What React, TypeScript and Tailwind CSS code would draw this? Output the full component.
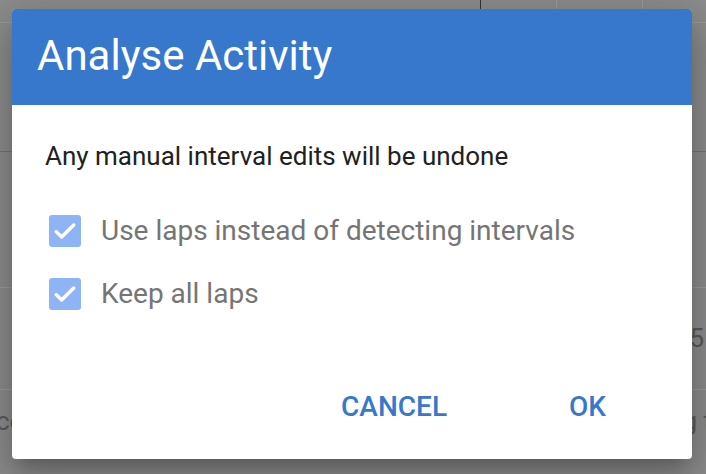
import React from 'react';

const Check: React.FC = () => (
    <span className="flex h-[32px] w-[32px] shrink-0 items-center justify-center rounded-[3px] bg-[#8fb4f6]">
        <svg viewBox="0 0 24 24" className="h-[30px] w-[30px]" fill="none" stroke="white" strokeWidth={2.8} strokeLinecap="round" strokeLinejoin="round">
            <path d="M5 12.5l4.3 4.3L19 7.2" />
        </svg>
    </span>
);

const App: React.FC = () => {
    const options = ['Use laps instead of detecting intervals', 'Keep all laps'];

    return (
        <div className="relative h-[474px] w-[706px] overflow-hidden bg-[#8c8c8c] font-['Roboto',sans-serif]">
            {/* dimmed page behind the dialog */}
            <div className="flex h-full flex-col">
                <div className="h-[23px] border-b border-[#999999]" />
                <div className="h-[129px] border-b border-[#8a6a72]" />
                <div className="h-[136px] border-b border-[#9a9a9a]" />
                <div className="flex h-[102px] items-center justify-end border-b border-[#999999] pr-[2px] text-[26px] text-[#5a5a5a]">5</div>
                <div className="flex flex-1 items-start justify-between pt-[12px] text-[26px] text-[#5a5a5a]">
                    <span className="-ml-[4px]">co</span>
                    <span className="-mr-[6px]">g t</span>
                </div>
            </div>
            <div className="absolute left-[480px] top-0 h-[10px] w-[1px] bg-[#333]" />
            <div className="absolute left-[556px] top-0 h-[10px] w-[1px] bg-[#9a9a9a]" />
            <div className="absolute left-[642px] top-0 h-[10px] w-[1px] bg-[#9a9a9a]" />

            {/* dialog */}
            <div className="absolute left-[12px] top-[9px] flex h-[450px] w-[680px] flex-col overflow-hidden rounded-[4px] bg-white shadow-[0_11px_15px_-7px_rgba(0,0,0,0.2),0_24px_38px_3px_rgba(0,0,0,0.14),0_9px_46px_8px_rgba(0,0,0,0.12)]">
                <div className="flex h-[96px] items-center bg-[#3778cc] px-[25px] pb-[2px]">
                    <h1 className="text-[42px] font-normal leading-[48px] text-white">Analyse Activity</h1>
                </div>
                <div className="flex flex-1 flex-col px-[33px] pt-[36px]">
                    <p className="text-[26px] leading-[30px] text-[#212121]">Any manual interval edits will be undone</p>
                    <div className="mt-[44px] flex flex-col gap-[31px] pl-[4px]">
                        {options.map(label => (
                            <label key={label} className="flex items-center gap-[20px]">
                                <Check />
                                <span className="text-[28px] leading-[32px] text-[#757575]">{label}</span>
                            </label>
                        ))}
                    </div>
                    <div className="mt-auto flex justify-end gap-[122px] pb-[36px] pr-[53px]">
                        <button className="text-[28px] font-medium leading-[32px] text-[#3778cc]">CANCEL</button>
                        <button className="text-[28px] font-medium leading-[32px] text-[#3778cc]">OK</button>
                    </div>
                </div>
            </div>
        </div>
    );
};

export default App;
